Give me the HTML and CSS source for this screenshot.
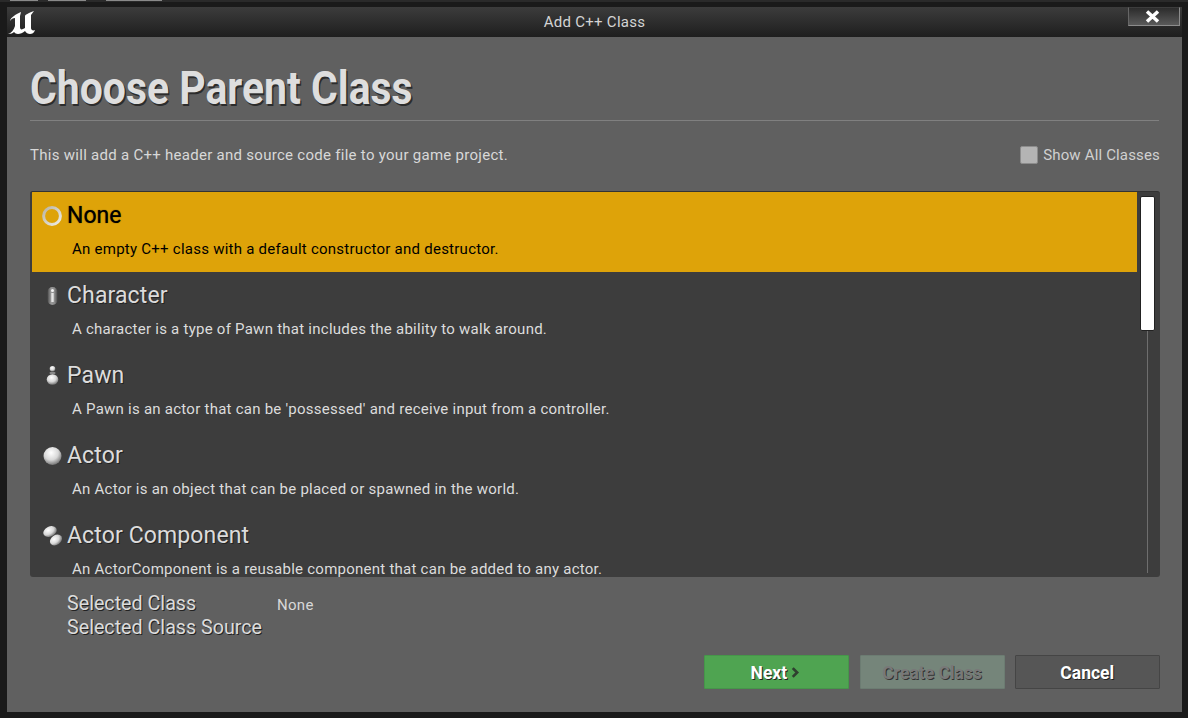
FILE: index.html
```html
<!DOCTYPE html>
<html lang="en">
<head>
<meta charset="utf-8">
<title>Add C++ Class</title>
<link rel="stylesheet" href="styles.css">
</head>
<body>
<svg class="defs" width="0" height="0" aria-hidden="true">
  <defs>
    <radialGradient id="ball" cx="0.42" cy="0.32" r="0.72">
      <stop offset="0" stop-color="#ffffff"/>
      <stop offset="0.55" stop-color="#d8d8d8"/>
      <stop offset="1" stop-color="#6a6a6a"/>
    </radialGradient>
    <linearGradient id="pill" x1="0" x2="1" y1="0" y2="0">
      <stop offset="0" stop-color="#4a4a4a"/>
      <stop offset="0.35" stop-color="#9a9a9a"/>
      <stop offset="0.7" stop-color="#8a8a8a"/>
      <stop offset="1" stop-color="#4a4a4a"/>
    </linearGradient>
    <linearGradient id="ring" x1="0" x2="1" y1="0" y2="1">
      <stop offset="0" stop-color="#b9b4a4"/>
      <stop offset="1" stop-color="#f0ede4"/>
    </linearGradient>
  </defs>
</svg>
<div class="topstrip"><span class="tab t1"></span><span class="tab t2"></span><span class="tab t3"></span></div>
<div class="window">
  <header class="titlebar">
    <svg class="logo" viewBox="0 0 30 30" aria-hidden="true">
      <path fill="#fff" d="M3 14C4 10 8 8 14 5L13 9V20C13 22 14 23 16 22L18 21V9C18 8 21 6 27 4L24 8V21C24 23 26 24 28 23C27 26 25 27 23 27C21 27 19 26 18 24C16 26 13 27 11 27C9 27 8 26 7 25C6 26 4 27 1 27C4 26 7 23 8 19V11C6 11 4 12 3 14Z"/>
    </svg>
    <span class="title">Add C++ Class</span>
    <button class="close" type="button" aria-label="Close">
      <svg viewBox="0 0 15 13" width="15" height="13" aria-hidden="true"><path d="M2 1.500l11 10M13 1.500l-11 10" stroke="#fff" stroke-width="3.500" fill="none"/></svg>
    </button>
  </header>
  <main class="content">
    <h1 class="heading">Choose Parent Class</h1>
    <div class="rule"></div>
    <div class="infobar">
      <p class="intro">This will add a C++ header and source code file to your game project.</p>
      <label class="showall"><span class="check"></span>Show All Classes</label>
    </div>
    <section class="panel">
      <div class="list">
        <div class="row selected">
          <div class="row-head">
            <svg class="ico" viewBox="0 0 22 22" aria-hidden="true"><circle cx="10" cy="11" r="8.400" fill="none" stroke="url(#ring)" stroke-width="3"/></svg>
            <span class="name">None</span>
          </div>
          <p class="desc">An empty C++ class with a default constructor and destructor.</p>
        </div>
        <div class="row">
          <div class="row-head">
            <svg class="ico" viewBox="0 0 22 22" aria-hidden="true"><rect x="5.500" y="2" width="10" height="18" rx="5" fill="url(#pill)"/><circle cx="10.500" cy="5.500" r="1.500" fill="#f4f4f4"/><rect x="9.300" y="8" width="2.400" height="9" fill="#e4e4e4"/></svg>
            <span class="name">Character</span>
          </div>
          <p class="desc">A character is a type of Pawn that includes the ability to walk around.</p>
        </div>
        <div class="row">
          <div class="row-head">
            <svg class="ico" viewBox="0 0 22 22" aria-hidden="true"><circle cx="10.500" cy="3.800" r="2.800" fill="url(#ball)"/><rect x="7.500" y="7" width="6" height="2" rx="1" fill="#8a8a8a"/><ellipse cx="10.500" cy="14.500" rx="5.800" ry="5.200" fill="url(#ball)"/></svg>
            <span class="name">Pawn</span>
          </div>
          <p class="desc">A Pawn is an actor that can be 'possessed' and receive input from a controller.</p>
        </div>
        <div class="row">
          <div class="row-head">
            <svg class="ico" viewBox="0 0 22 22" aria-hidden="true"><circle cx="10.500" cy="11" r="9" fill="url(#ball)"/></svg>
            <span class="name">Actor</span>
          </div>
          <p class="desc">An Actor is an object that can be placed or spawned in the world.</p>
        </div>
        <div class="row">
          <div class="row-head">
            <svg class="ico" viewBox="0 0 22 22" aria-hidden="true"><ellipse cx="8" cy="6.500" rx="7" ry="5" transform="rotate(-25 8 6.500)" fill="url(#ball)"/><ellipse cx="14" cy="15" rx="6.500" ry="4.800" transform="rotate(-35 14 15)" fill="url(#ball)"/></svg>
            <span class="name">Actor Component</span>
          </div>
          <p class="desc">An ActorComponent is a reusable component that can be added to any actor.</p>
        </div>
      </div>
      <div class="scrollbar"><div class="thumb"></div></div>
    </section>
    <section class="selection">
      <div class="sel-row"><span class="sel-label">Selected Class</span><span class="sel-value">None</span></div>
      <div class="sel-row"><span class="sel-label">Selected Class Source</span></div>
    </section>
    <footer class="actions">
      <button class="btn next" type="button"><span class="btn-text">Next</span><svg class="chev" viewBox="0 0 8 10" width="9" height="11" aria-hidden="true"><path d="M1.500 1l4 4-4 4" stroke="#2f3f2f" stroke-width="2.400" fill="none"/></svg></button>
      <button class="btn create" type="button" disabled><span class="btn-text">Create Class</span></button>
      <button class="btn cancel" type="button"><span class="btn-text">Cancel</span></button>
    </footer>
  </main>
</div>
</body>
</html>
```
FILE: styles.css
```css
* { box-sizing: border-box; }
html, body { margin: 0; padding: 0; height: 100%; }
body {
  width: 1188px;
  height: 718px;
  overflow: hidden;
  background: #1a1a1a;
  font-family: Roboto, "Liberation Sans", sans-serif;
  display: flex;
  flex-direction: column;
}
.defs { position: absolute; }
.topstrip {
  height: 2px;
  background: #2a2a2a;
  display: flex;
  flex: none;
  padding-left: 10px;
  gap: 10px;
}
.tab { display: block; height: 1px; background: #8a8a8a; }
.t1 { width: 28px; }
.t2 { width: 38px; }
.t3 { width: 56px; margin-left: 10px; }
.window {
  flex: 1;
  display: flex;
  flex-direction: column;
  padding: 5px 6px 6px 7px;
  min-height: 0;
}
.titlebar {
  height: 30px;
  flex: none;
  display: flex;
  align-items: center;
  justify-content: center;
  position: relative;
  background: linear-gradient(#3c3c3c, #1e1e1e);
}
.logo { position: absolute; left: 0; top: 0; width: 30px; height: 30px; }
.title { color: #d4d4d4; font-size: 15px; letter-spacing: 0.28px; line-height: 30px; }
.close {
  position: absolute;
  right: 2px;
  top: 0;
  width: 52px;
  height: 19px;
  padding: 0 4px 0 0;
  display: flex;
  align-items: center;
  justify-content: center;
  background: linear-gradient(#2c2c2c, #5a5a5a);
  border: 1px solid #8c8c8c;
  border-top-color: #3c3c3c;
  border-left-color: #666;
}
.content {
  flex: 1;
  min-height: 0;
  background: #606060;
  padding: 25px 22px 0 23px;
  display: flex;
  flex-direction: column;
}
.heading {
  margin: 0;
  height: 58px;
  font-size: 46px;
  line-height: 52px;
  font-weight: 700;
  color: #dedede;
  text-shadow: 1.500px 1.500px 0 #2c2c2c;
  white-space: nowrap;
  transform: scaleX(0.89);
  transform-origin: left center;
}
.rule { height: 1px; background: #808080; margin-right: 1px; flex: none; }
.infobar {
  height: 70px;
  flex: none;
  display: flex;
  justify-content: space-between;
  padding-top: 25px;
}
.intro {
  margin: 0;
  font-size: 15px;
  line-height: 18px;
  color: #d8d8d8;
  letter-spacing: 0.28px;
}
.showall {
  display: flex;
  align-items: flex-start;
  gap: 5px;
  font-size: 15px;
  line-height: 18px;
  color: #d0d0d0;
  letter-spacing: 0.16px;
}
.check {
  width: 18px;
  height: 18px;
  background: #b4b4b4;
  border-radius: 2px;
  border: 1px solid #8c8c8c;
  flex: none;
}
.panel {
  height: 386px;
  flex: none;
  background: #3d3d3d;
  border-radius: 3px;
  border-top: 1px solid #333;
  padding-left: 2px;
  display: flex;
  overflow: hidden;
}
.list { width: 1105px; flex: none; }
.row { height: 80px; padding-left: 10px; position: relative; }
.row.selected { background: #dea309; }
.row-head { display: flex; align-items: center; height: 48px; }
.ico { width: 22px; height: 22px; flex: none; margin-right: 3px; }
.name { font-size: 23px; letter-spacing: 0.12px; line-height: 48px; color: #dcdcdc; text-shadow: 1px 1px 0 #222; }
.desc {
  margin: 0;
  padding-left: 30px;
  font-size: 15px;
  line-height: 18px;
  color: #dcdcdc;
  letter-spacing: 0.25px;
  white-space: nowrap;
}
.selected .name { color: #000; text-shadow: 0 0 1px #3a2a00; letter-spacing: 0; }
.selected .desc { color: #000; }
.scrollbar { flex: 1; position: relative; padding: 4px 5px 0 3px; }
.scrollbar::before {
  content: "";
  position: absolute;
  left: 10px;
  top: 139px;
  bottom: 4px;
  width: 1px;
  background: #6e6e6e;
}
.thumb {
  height: 135px;
  width: 15px;
  background: #fff;
  border: 1px solid #222;
  border-radius: 2px;
}
.selection { padding: 15px 0 0 37px; height: 78px; flex: none; }
.sel-row { display: flex; height: 24px; align-items: center; }
.sel-label {
  width: 210px;
  font-size: 19.700px;
  line-height: 24px;
  color: #dcdcdc;
  text-shadow: 1px 1px 0 #222;
  white-space: nowrap;
}
.sel-value { font-size: 15px; color: #d8d8d8; letter-spacing: 0.3px; padding-top: 2px; }
.actions { display: flex; justify-content: flex-end; gap: 10.500px; }
.btn {
  width: 145px;
  height: 34px;
  padding: 0;
  font-family: inherit;
  font-size: 19px;
  font-weight: 700;
  color: #fff;
  text-shadow: 1px 1px 0 #222;
  border-radius: 1px;
  display: flex;
  align-items: center;
  justify-content: center;
}
.btn-text { display: block; transform: scaleX(0.92); }
.next { background: #4fa451; border: 1px solid #46964a; }
.chev { margin: 0 4px 0 3px; }
.create { background: #75857a; border: 1px solid #6c7c72; color: #787878; text-shadow: 1px 1px 0 #333; }
.cancel { background: #565656; border: 1px solid #454545; }
```
